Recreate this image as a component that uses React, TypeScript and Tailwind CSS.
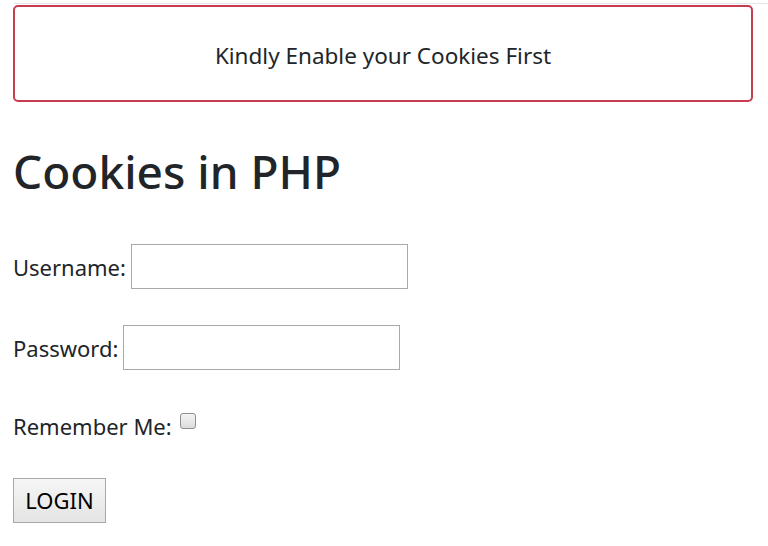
import React from "react";

export default function App() {
  return (
    <div className="min-h-[546px] bg-white text-[#212529]" style={{ fontFamily: '"Segoe UI", "Noto Sans", "Open Sans", sans-serif' }}>
      <div className="pt-[3px] pl-[13px] pr-[15px]">
        <div className="h-px bg-[#e6e6e6] ml-[1px] -mr-[15px]" />
        <div className="mt-[1px] h-[97px] pt-[4px] border-2 border-[#c83c50] rounded-[5px] flex items-center justify-center text-[22.5px]">
          Kindly Enable your Cookies First
        </div>
        <h1 className="mt-[40px] text-[46px] leading-[58px] font-medium">Cookies in PHP</h1>
        <div className="mt-[44px] flex items-center h-[45px] text-[22px]">
          <span className="pt-[2px]">Username:</span>
          <input type="text" className="ml-[5px] w-[277px] h-[45px] border border-[#a9a9a9] bg-white outline-none" />
        </div>
        <div className="mt-[36px] flex items-center h-[45px] text-[22px]">
          <span className="pt-[2px]">Password:</span>
          <input type="password" className="ml-[5px] w-[277px] h-[45px] border border-[#a9a9a9] bg-white outline-none" />
        </div>
        <div className="mt-[41px] flex items-start text-[22px] leading-[30px]">
          <span>Remember Me:</span>
          <span className="ml-[8px] mt-[2px] w-[16px] h-[16px] rounded-[3px] border border-[#8f8f8f] bg-gradient-to-b from-[#f4f4f4] to-[#dcdcdc]" />
        </div>
        <button className="mt-[37px] w-[93px] h-[45px] border border-[#a9a9a9] bg-gradient-to-b from-[#f6f6f6] to-[#e4e4e4] text-[22px] text-black flex items-center justify-center">
          LOGIN
        </button>
      </div>
    </div>
  );
}
